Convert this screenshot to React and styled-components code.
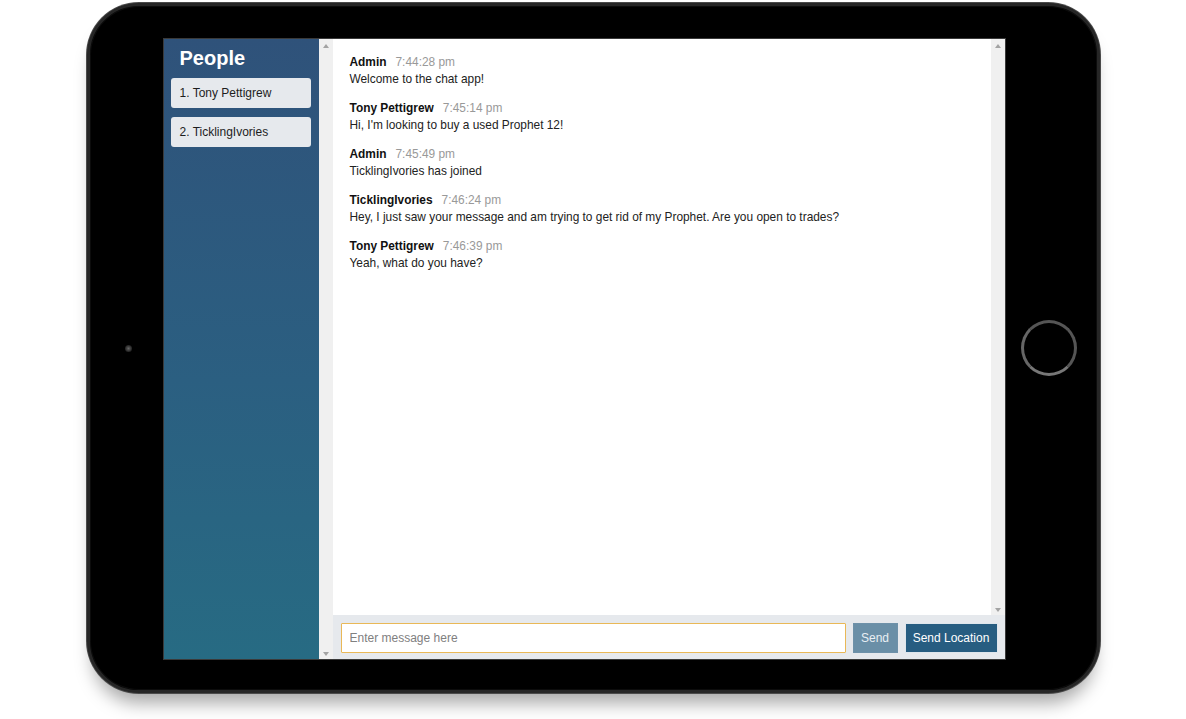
import React from 'react';
import styled, { createGlobalStyle } from 'styled-components';

const GlobalStyle = createGlobalStyle`
  html, body {
    margin: 0;
    padding: 0;
    background: #fff;
  }
  body {
    font-family: "Liberation Sans", Arial, sans-serif;
  }
  * {
    box-sizing: border-box;
  }
`;

const Stage = styled.div`
  width: 1186px;
  height: 719px;
  display: flex;
  justify-content: center;
  padding-top: 3px;
  overflow: hidden;
`;

const Device = styled.div`
  width: 1013px;
  height: 690px;
  border-radius: 52px;
  background: #000;
  border: 3px solid #262626;
  box-shadow: 0 0 0 1px #4a4a4a, inset 0 0 0 1px #0c0c0c, 0 16px 18px -6px rgba(0, 0, 0, 0.35);
  display: flex;
  align-items: flex-start;
  padding: 32px 0 0 35px;
  position: relative;
`;

const Camera = styled.div`
  width: 7px;
  height: 7px;
  border-radius: 50%;
  background: radial-gradient(circle, #666 0%, #2a2a2a 60%, #111 100%);
  align-self: center;
  margin-top: -32px;
  flex-shrink: 0;
`;

const HomeButton = styled.div`
  width: 56px;
  height: 56px;
  border-radius: 50%;
  border: 3px solid #555;
  border-bottom-color: #777;
  border-left-color: #666;
  align-self: center;
  margin-top: -32px;
  margin-left: 15px;
  flex-shrink: 0;
`;

const Screen = styled.div`
  margin-left: 31px;
  width: 843px;
  height: 622px;
  border: 1px solid #3a3a3a;
  display: flex;
  background: #fff;
  flex-shrink: 0;
`;

const Sidebar = styled.aside`
  width: 155px;
  flex-shrink: 0;
  background: linear-gradient(to bottom, #2f527a 0%, #2b5f81 55%, #276b83 100%);
  padding: 6px 8px 0 7px;
  display: flex;
  flex-direction: column;
`;

const SidebarTitle = styled.h3`
  margin: 0 0 7px 9px;
  color: #fff;
  font-size: 20px;
  line-height: 26px;
  font-weight: bold;
`;

const PeopleList = styled.ol`
  list-style: none;
  margin: 0;
  padding: 0;
  display: flex;
  flex-direction: column;
  gap: 9px;
`;

const Person = styled.li`
  height: 30px;
  background: #e6e9ed;
  border-radius: 3px;
  padding-left: 9px;
  display: flex;
  align-items: center;
  font-size: 12px;
  color: #1d1d1d;
`;

const Scrollbar = styled.div`
  width: 14px;
  flex-shrink: 0;
  background: #f0f0f0;
  display: flex;
  flex-direction: column;
  justify-content: space-between;
  align-items: center;
  padding: 5px 0 3px;
`;

const Arrow = styled.span`
  width: 0;
  height: 0;
  border-left: 3.5px solid transparent;
  border-right: 3.5px solid transparent;
  ${(p) =>
    p.down
      ? 'border-top: 4px solid #a3a3a3;'
      : 'border-bottom: 4px solid #a3a3a3;'}
`;

const Main = styled.main`
  flex: 1;
  display: flex;
  flex-direction: column;
  min-width: 0;
`;

const MessagesRow = styled.div`
  flex: 1;
  display: flex;
  min-height: 0;
`;

const Messages = styled.ol`
  flex: 1;
  list-style: none;
  margin: 0;
  padding: 15px 17px;
  display: flex;
  flex-direction: column;
  gap: 12px;
`;

const Message = styled.li`
  font-size: 11.9px;
  line-height: 17px;
`;

const MessageTitle = styled.div`
  display: flex;
  align-items: baseline;
  gap: 9px;
`;

const Author = styled.span`
  font-weight: bold;
  color: #111;
`;

const Time = styled.span`
  color: #999;
`;

const Body = styled.p`
  margin: 0;
  color: #222;
`;

const Footer = styled.form`
  height: 44px;
  background: #e6e9ed;
  display: flex;
  align-items: center;
  padding: 2px 7px 0 8px;
`;

const Input = styled.input`
  flex: 1;
  min-width: 0;
  height: 30px;
  border: 1px solid #e9b857;
  border-radius: 1px;
  background: #fff;
  padding: 0 8px;
  font-family: "Liberation Sans", Arial, sans-serif;
  font-size: 12px;
  outline: none;
  &::placeholder {
    color: #808080;
  }
`;

const Button = styled.button`
  height: 30px;
  width: ${(p) => p.w}px;
  margin-left: ${(p) => p.gap}px;
  padding: 0;
  flex-shrink: 0;
  border: 1px solid ${(p) => (p.faded ? '#6e91a9' : '#dfe6ec')};
  background: ${(p) => (p.faded ? '#6a8fa7' : '#275d81')};
  color: ${(p) => (p.faded ? '#e8eef3' : '#fff')};
  font-family: "Liberation Sans", Arial, sans-serif;
  font-size: 12px;
  cursor: pointer;
`;

const people = ['Tony Pettigrew', 'TicklingIvories'];

const messages = [
  { from: 'Admin', at: '7:44:28 pm', text: 'Welcome to the chat app!' },
  { from: 'Tony Pettigrew', at: '7:45:14 pm', text: "Hi, I'm looking to buy a used Prophet 12!" },
  { from: 'Admin', at: '7:45:49 pm', text: 'TicklingIvories has joined' },
  {
    from: 'TicklingIvories',
    at: '7:46:24 pm',
    text: 'Hey, I just saw your message and am trying to get rid of my Prophet. Are you open to trades?',
  },
  { from: 'Tony Pettigrew', at: '7:46:39 pm', text: 'Yeah, what do you have?' },
];

export default function App() {
  return (
    <>
      <GlobalStyle />
      <Stage>
        <Device>
          <Camera />
          <Screen>
            <Sidebar>
              <SidebarTitle>People</SidebarTitle>
              <PeopleList>
                {people.map((p, i) => (
                  <Person key={p}>{`${i + 1}. ${p}`}</Person>
                ))}
              </PeopleList>
            </Sidebar>
            <Scrollbar>
              <Arrow />
              <Arrow down />
            </Scrollbar>
            <Main>
              <MessagesRow>
                <Messages>
                  {messages.map((m, i) => (
                    <Message key={i}>
                      <MessageTitle>
                        <Author>{m.from}</Author>
                        <Time>{m.at}</Time>
                      </MessageTitle>
                      <Body>{m.text}</Body>
                    </Message>
                  ))}
                </Messages>
                <Scrollbar>
                  <Arrow />
                  <Arrow down />
                </Scrollbar>
              </MessagesRow>
              <Footer onSubmit={(e) => e.preventDefault()}>
                <Input placeholder="Enter message here" />
                <Button faded w={45} gap={7}>Send</Button>
                <Button w={93} gap={7}>Send Location</Button>
              </Footer>
            </Main>
          </Screen>
          <HomeButton />
        </Device>
      </Stage>
    </>
  );
}
